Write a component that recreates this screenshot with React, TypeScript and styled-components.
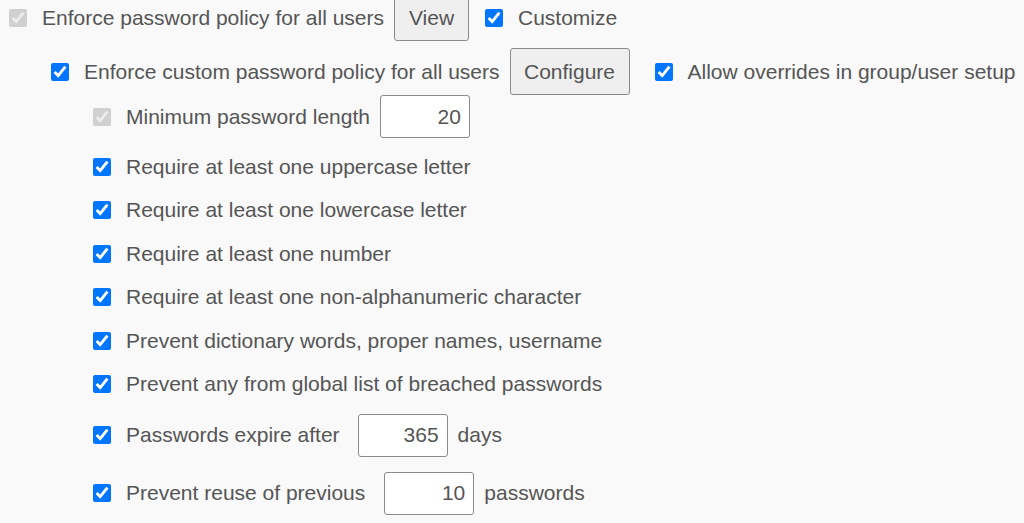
import React from "react";
import styled, { createGlobalStyle } from "styled-components";

const Global = createGlobalStyle`
  html, body { margin: 0; padding: 0; background: #f9f9f9; }
  body { font-family: "Liberation Sans", Arial, sans-serif; color: #555; font-size: 21px; overflow: hidden; }
`;

const Page = styled.div`
  display: flex;
  flex-direction: column;
  margin-top: -6px;
  width: 1024px;
  height: 529px;
`;

const Row = styled.div<{ $level: number; $h: number; $mt: number }>`
  display: flex;
  align-items: center;
  height: ${(p) => p.$h}px;
  margin-top: ${(p) => p.$mt}px;
  padding-left: ${(p) => 9 + p.$level * 42}px;
  white-space: nowrap;
`;

const Check = styled.input.attrs({ type: "checkbox" })<{ $ml?: number }>`
  width: 18px;
  height: 18px;
  margin: 0 15px 0 ${(p) => p.$ml ?? 0}px;
  flex: none;
`;

const Label = styled.span``;

const Button = styled.button<{ $ml: number; $w: number }>`
  height: 47px;
  width: ${(p) => p.$w}px;
  margin-left: ${(p) => p.$ml}px;
  padding: 0;
  font-family: "Liberation Sans", Arial, sans-serif;
  font-size: 21px;
  color: #555;
  background: #efefef;
  border: 1px solid #8a8a8a;
  border-radius: 3px;
  flex: none;
`;

const NumberBox = styled.input<{ $ml: number }>`
  box-sizing: border-box;
  width: 90px;
  height: 43px;
  margin: 0 10px 0 ${(p) => p.$ml}px;
  padding: 0 8px 0 4px;
  text-align: right;
  font-family: "Liberation Sans", Arial, sans-serif;
  font-size: 21px;
  color: #555;
  background: #fff;
  border: 1px solid #8a8a8a;
  border-radius: 3px;
  flex: none;
`;

const simple = [
  "Require at least one uppercase letter",
  "Require at least one lowercase letter",
  "Require at least one number",
  "Require at least one non-alphanumeric character",
  "Prevent dictionary words, proper names, username",
  "Prevent any from global list of breached passwords",
];

export default function App() {
  return (
    <>
      <Global />
      <Page>
        <Row $level={0} $h={47} $mt={0}>
          <Check defaultChecked disabled />
          <Label>Enforce password policy for all users</Label>
          <Button $ml={10} $w={75}>View</Button>
          <Check defaultChecked $ml={16} />
          <Label>Customize</Label>
        </Row>
        <Row $level={1} $h={47} $mt={7}>
          <Check defaultChecked />
          <Label>Enforce custom password policy for all users</Label>
          <Button $ml={10} $w={120}>Configure</Button>
          <Check defaultChecked $ml={25} />
          <Label>Allow overrides in group/user setup</Label>
        </Row>
        <Row $level={2} $h={43} $mt={0}>
          <Check defaultChecked disabled />
          <Label>Minimum password length</Label>
          <NumberBox $ml={10} defaultValue="20" />
        </Row>
        {simple.map((t, i) => (
          <Row key={t} $level={2} $h={43.4} $mt={i === 0 ? 7.3 : 0}>
            <Check defaultChecked />
            <Label>{t}</Label>
          </Row>
        ))}
        <Row $level={2} $h={43} $mt={8.3}>
          <Check defaultChecked />
          <Label>Passwords expire after</Label>
          <NumberBox $ml={18} defaultValue="365" />
          <Label>days</Label>
        </Row>
        <Row $level={2} $h={43} $mt={15}>
          <Check defaultChecked />
          <Label>Prevent reuse of previous</Label>
          <NumberBox $ml={19} defaultValue="10" />
          <Label>passwords</Label>
        </Row>
      </Page>
    </>
  );
}
